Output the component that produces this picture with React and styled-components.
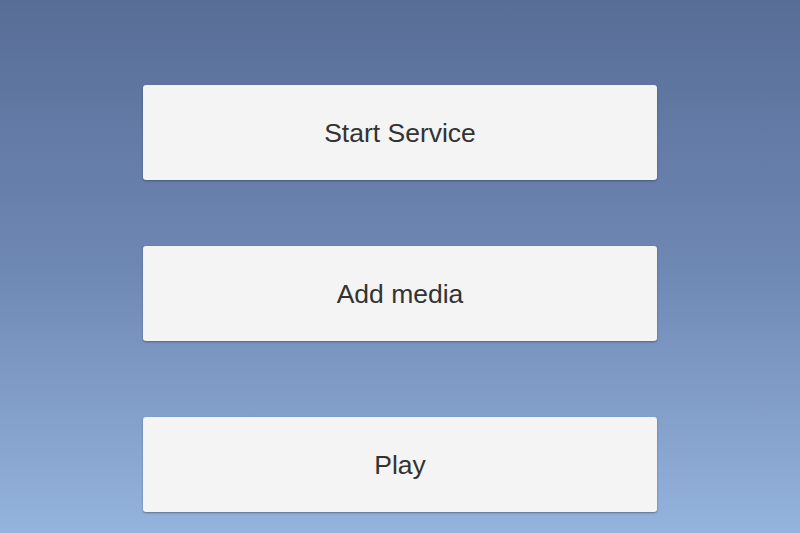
import React from 'react';
import styled, { createGlobalStyle } from 'styled-components';

const GlobalStyle = createGlobalStyle`
  html, body {
    margin: 0;
    padding: 0;
  }
  body {
    font-family: "Liberation Sans", Arial, sans-serif;
  }
`;

const Screen = styled.div`
  width: 800px;
  height: 533px;
  overflow: hidden;
  background: linear-gradient(180deg, #576d96 0%, #6e88b4 50%, #94b3dd 100%);
  display: flex;
  flex-direction: column;
  align-items: center;
  padding-top: 85px;
  box-sizing: border-box;
`;

const MenuButton = styled.button`
  width: 514px;
  height: 95px;
  margin-top: ${(p) => p.$offset || 0}px;
  background: #f4f4f4;
  border: none;
  border-radius: 3px;
  box-shadow: 0 1px 2px rgba(30, 40, 60, 0.45);
  font-family: "Liberation Sans", Arial, sans-serif;
  font-size: 26.5px;
  color: #333333;
  display: flex;
  align-items: center;
  justify-content: center;
  padding: 2px 0 0;
  cursor: pointer;
`;

const App = () => {
  return (
    <>
      <GlobalStyle />
      <Screen>
        <MenuButton>Start Service</MenuButton>
        <MenuButton $offset={66}>Add media</MenuButton>
        <MenuButton $offset={76}>Play</MenuButton>
      </Screen>
    </>
  );
};

export default App;
